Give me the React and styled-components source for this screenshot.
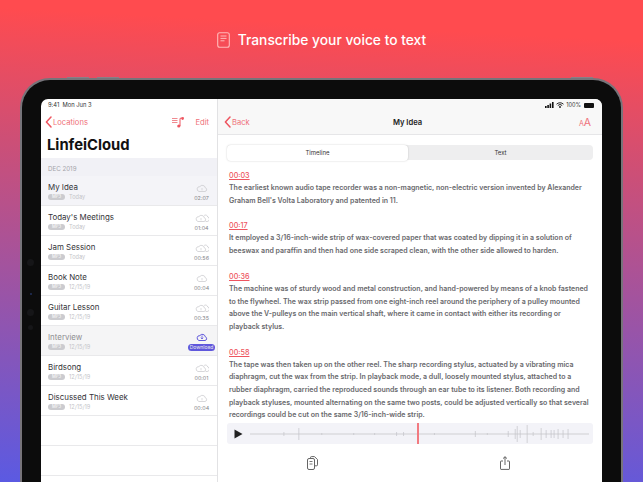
import React from "react";
import styled, { createGlobalStyle } from "styled-components";

const GlobalStyle = createGlobalStyle`
  html, body {
    margin: 0;
    padding: 0;
    height: 100%;
    overflow: hidden;
  }
  body {
    font-family: Inter, "Liberation Sans", sans-serif;
  }
`;

const recordings = [
  { title: "My Idea", date: "Today", time: "02:07", active: true },
  { title: "Today's Meetings", date: "Today", time: "01:04", multi: true },
  { title: "Jam Session", date: "Today", time: "00:56", multi: true },
  { title: "Book Note", date: "12/15/19", time: "00:04" },
  { title: "Guitar Lesson", date: "12/15/19", time: "00:35", multi: true },
  { title: "Interview", date: "12/15/19", download: true },
  { title: "Birdsong", date: "12/15/19", time: "00:01", multi: true },
  { title: "Discussed This Week", date: "12/15/19", time: "00:04" },
];

const transcript = [
  {
    time: "00:03",
    text: "The earliest known audio tape recorder was a non-magnetic, non-electric version invented by Alexander Graham Bell's Volta Laboratory and patented in 11.",
  },
  {
    time: "00:17",
    text: "It employed a 3/16-inch-wide strip of wax-covered paper that was coated by dipping it in a solution of beeswax and paraffin and then had one side scraped clean, with the other side allowed to harden.",
  },
  {
    time: "00:36",
    text: "The machine was of sturdy wood and metal construction, and hand-powered by means of a knob fastened to the flywheel. The wax strip passed from one eight-inch reel around the periphery of a pulley mounted above the V-pulleys on the main vertical shaft, where it came in contact with either its recording or playback stylus.",
  },
  {
    time: "00:58",
    text: "The tape was then taken up on the other reel. The sharp recording stylus, actuated by a vibrating mica diaphragm, cut the wax from the strip. In playback mode, a dull, loosely mounted stylus, attached to a rubber diaphragm, carried the reproduced sounds through an ear tube to its listener. Both recording and playback styluses, mounted alternating on the same two posts, could be adjusted vertically so that several recordings could be cut on the same 3/16-inch-wide strip.",
  },
];

// ticks of the wave form: [x, half height]
const ticks = [
  [34, 2], [49, 6], [72, 1], [104, 1], [125, 1], [147, 2], [154, 2], [185, 1], [226, 3],
  [238, 1], [259, 3], [266, 5], [268, 8], [271, 4], [278, 9], [284, 2], [292, 6], [297, 4],
  [302, 4], [305, 4], [309, 5], [314, 4], [319, 5],
];

const ChevronLeft = () => (
  <svg width="7" height="12" viewBox="0 0 7 12" fill="none">
    <path d="M6 1L1.4 6L6 11" stroke="#ee5560" strokeWidth="1.5" strokeLinecap="round" strokeLinejoin="round" />
  </svg>
);

const CLOUD = "M3 8.5h6a1.9 1.9 0 0 0 .3-3.7A3 3 0 0 0 3.9 3.6 2.5 2.5 0 0 0 3 8.5Z";

const Cloud = ({ color = "#c6c6ca", multi, arrow }) => (
  <svg width="14" height="10" viewBox="0 0 14 10" fill="none">
    {multi ? (
      <>
        <path d="M9.2 2.4a2.4 2.4 0 0 1 3.6 1.6 2.3 2.3 0 0 1-.6 4.5h-1.6" stroke={color} strokeWidth="0.7" />
        <path d={CLOUD} stroke={color} strokeWidth="0.7" />
        <path d="M6 5v2.4" stroke={color} strokeWidth="0.6" />
      </>
    ) : (
      <g transform="translate(1 0)">
        <path d={CLOUD} stroke={color} strokeWidth={arrow ? 1 : 0.7} />
        {arrow ? (
          <path d="M6 3.4v3.6M4.8 5.7L6 7l1.2-1.3" stroke={color} strokeWidth="0.8" />
        ) : (
          <path d="M6 5v2.4" stroke={color} strokeWidth="0.6" />
        )}
      </g>
    )}
  </svg>
);

export default function App() {
  return (
    <>
      <GlobalStyle />
      <Page>
        <Headline>
          <svg width="13" height="16" viewBox="0 0 13 16" fill="none">
            <rect x="0.7" y="0.7" width="11.6" height="14.6" rx="2" stroke="#ffb9b9" strokeWidth="1.1" />
            <path d="M3.5 4h6M3.5 6.4h6M3.5 8.8h4" stroke="#ffb9b9" strokeWidth="1" />
          </svg>
          Transcribe your voice to text
        </Headline>
        <Device>
          <CameraDots>
            <i />
            <i />
            <i />
            <i />
          </CameraDots>
          <Screen>
            <Sidebar>
              <StatusBar>9:41&nbsp; Mon Jun 3</StatusBar>
              <SideNav>
                <NavLink>
                  <ChevronLeft />
                  Locations
                </NavLink>
                <SideActions>
                  <svg width="12" height="11" viewBox="0 0 12 11" fill="none">
                    <path d="M0 1.5h5.5M0 3.5h5.5M0 5.5h5.5" stroke="#f08a90" strokeWidth="1" />
                    <path d="M8 9V1.4L11.5 .6" stroke="#ee5560" strokeWidth="1" />
                    <circle cx="6.8" cy="9" r="1.6" fill="#ee5560" />
                    <circle cx="10.6" cy="1.6" r="1.3" fill="#ee5560" />
                  </svg>
                  <NavLink>Edit</NavLink>
                </SideActions>
              </SideNav>
              <BigTitle>LinfeiCloud</BigTitle>
              <MonthHeader>DEC 2019</MonthHeader>
              {recordings.map((item) => (
                <Row key={item.title} $active={item.active} $dim={item.download}>
                  <RowText>
                    <RowTitle $dim={item.download}>{item.title}</RowTitle>
                    <RowMeta>
                      <Badge>MP3</Badge>
                      {item.date}
                    </RowMeta>
                  </RowText>
                  <RowSide>
                    {item.download ? (
                      <>
                        <Cloud color="#5f57dc" arrow />
                        <DownloadPill>Download</DownloadPill>
                      </>
                    ) : (
                      <>
                        <Cloud multi={item.multi} />
                        <Duration>{item.time}</Duration>
                      </>
                    )}
                  </RowSide>
                </Row>
              ))}
              <Row />
              <Row />
            </Sidebar>
            <Detail>
              <DetailTop>
                <DetailStatus>
                  <svg width="9" height="6" viewBox="0 0 9 6">
                    <path d="M0 4h1.6v2H0zM2.3 3h1.6v3H2.3zM4.6 1.6h1.6V6H4.6zM7 0h1.6v6H7z" fill="#111" />
                  </svg>
                  <svg width="8" height="6" viewBox="0 0 8 6" fill="none">
                    <path d="M.5 2.2a5 5 0 0 1 7 0M1.8 3.5a3.2 3.2 0 0 1 4.4 0" stroke="#111" strokeWidth="0.9" />
                    <circle cx="4" cy="5" r="0.9" fill="#111" />
                  </svg>
                  100%
                  <BatteryIcon />
                </DetailStatus>
                <DetailNav>
                  <NavLink>
                    <ChevronLeft />
                    Back
                  </NavLink>
                  <DetailTitle>My Idea</DetailTitle>
                  <FontToggle>
                    <small>A</small>A
                  </FontToggle>
                </DetailNav>
              </DetailTop>
              <DetailBody>
                <Segments>
                  <Segment $selected>Timeline</Segment>
                  <Segment>Text</Segment>
                </Segments>
                <Transcript>
                  {transcript.map((block) => (
                    <Block key={block.time}>
                      <Stamp>{block.time}</Stamp>
                      <Paragraph>{block.text}</Paragraph>
                    </Block>
                  ))}
                </Transcript>
                <Player>
                  <svg width="9" height="10" viewBox="0 0 9 10">
                    <path d="M0.5 0.5L8.5 5L0.5 9.5Z" fill="#222" />
                  </svg>
                  <Wave viewBox="0 0 340 20" preserveAspectRatio="none">
                    <path d="M0 10H340" stroke="#cfcfd3" strokeWidth="1" />
                    {ticks.map(([x, h]) => (
                      <path key={x} d={`M${x} ${10 - h}V${10 + h}`} stroke="#c2c2c8" strokeWidth="0.7" />
                    ))}
                  </Wave>
                  <Playhead />
                </Player>
                <BottomBar>
                  <svg width="11" height="14" viewBox="0 0 11 14" fill="none">
                    <rect x="0.5" y="2.5" width="7" height="11" rx="1.5" stroke="#555" strokeWidth="0.9" />
                    <path d="M3.5 2.2V1.6a1 1 0 0 1 1-1h3l3 3v5.2a1 1 0 0 1-1 1H8" stroke="#555" strokeWidth="0.9" />
                    <path d="M2.5 5.5h3M2.5 8h3" stroke="#555" strokeWidth="0.8" />
                  </svg>
                  <svg width="10" height="14" viewBox="0 0 10 14" fill="none">
                    <path d="M3 5H1a.6.6 0 0 0-.5.6v7.2a.6.6 0 0 0 .5.6h8a.6.6 0 0 0 .5-.6V5.6A.6.6 0 0 0 9 5H7" stroke="#555" strokeWidth="0.9" />
                    <path d="M5 9V.8M3 2.6L5 .7l2 1.9" stroke="#555" strokeWidth="0.9" />
                  </svg>
                </BottomBar>
              </DetailBody>
            </Detail>
          </Screen>
        </Device>
      </Page>
    </>
  );
}

const Page = styled.div`
  width: 643px;
  height: 482px;
  overflow: hidden;
  display: flex;
  flex-direction: column;
  align-items: center;
  background: linear-gradient(183deg, #ff4b4f 0%, #ff4b4f 8%, #cc4f77 34%, #5b5ae2 100%);
`;

const Headline = styled.h1`
  margin: 0;
  height: 78px;
  flex: none;
  display: flex;
  align-items: center;
  gap: 8px;
  padding-top: 2px;
  box-sizing: border-box;
  color: #fff;
  font-size: 13.8px;
  font-weight: 500;
`;

const Device = styled.div`
  position: relative;
  width: 603px;
  height: 430px;
  flex: none;
  box-sizing: border-box;
  padding: 19px 19px 0 19px;
  background: #0c0c0c;
  border: 2px solid #77747a;
  border-bottom: 0;
  border-radius: 30px 30px 0 0;

  /* volume buttons along the top edge */
  &::before {
    content: "";
    position: absolute;
    top: -3px;
    left: 45px;
    width: 52px;
    height: 1px;
    background: linear-gradient(90deg, #8a7f86 0 42%, transparent 42% 58%, #8a7f86 58%);
  }
  /* power button */
  &::after {
    content: "";
    position: absolute;
    top: -3px;
    right: 28px;
    width: 22px;
    height: 1px;
    background: #8a7f86;
  }
`;

const CameraDots = styled.div`
  position: absolute;
  left: 5px;
  top: 179px;
  display: flex;
  flex-direction: column;
  align-items: center;
  gap: 13px;
  i {
    width: 7px;
    height: 7px;
    border-radius: 50%;
    background: #161618;
  }
  i:nth-child(2) {
    width: 2px;
    height: 2px;
    margin: 14px 0 1px;
    background: #22305c;
  }
  i:nth-child(4) {
    width: 5px;
    height: 5px;
    margin-top: -4px;
  }
`;

const Screen = styled.div`
  height: 100%;
  display: flex;
  overflow: hidden;
  background: #fff;
  border-radius: 7px 7px 0 0;
`;

const Sidebar = styled.aside`
  width: 176px;
  flex: none;
  border-right: 1px solid #e2e2e4;
  color: #111;
`;

const StatusBar = styled.div`
  height: 11px;
  padding: 1px 0 0 7px;
  box-sizing: border-box;
  font-size: 5.8px;
  line-height: 10px;
  color: #333;
`;

const SideNav = styled.div`
  height: 24px;
  display: flex;
  align-items: center;
  justify-content: space-between;
  padding: 0 8px 0 4px;
`;

const NavLink = styled.span`
  display: inline-flex;
  align-items: center;
  gap: 1px;
  color: #ef7078;
  font-size: 7.6px;
`;

const SideActions = styled.div`
  display: flex;
  align-items: center;
  gap: 11px;
`;

const BigTitle = styled.div`
  height: 24px;
  padding-left: 6px;
  font-size: 14.8px;
  line-height: 22px;
  font-weight: 700;
  color: #111;
`;

const MonthHeader = styled.div`
  height: 18px;
  padding-left: 7px;
  background: #f1f1f6;
  color: #a4a4aa;
  font-size: 6.2px;
  line-height: 22px;
`;

const Row = styled.div`
  height: 30px;
  box-sizing: border-box;
  display: flex;
  align-items: center;
  justify-content: space-between;
  padding: 2px 8px 0 7px;
  border-bottom: 1px solid #e9e9eb;
  background: ${(p) => (p.$active ? "#f4f4f8" : p.$dim ? "#f5f5f6" : "#fff")};
`;

const RowText = styled.div`
  display: flex;
  flex-direction: column;
  gap: 1px;
  margin-bottom: 2px;
`;

const RowTitle = styled.div`
  font-size: 7.9px;
  line-height: 11px;
  color: ${(p) => (p.$dim ? "#8e8e92" : "#333338")};
`;

const RowMeta = styled.div`
  display: flex;
  align-items: center;
  gap: 4px;
  font-size: 5.6px;
  color: #c4c4c8;
`;

const Badge = styled.span`
  display: inline-block;
  padding: 0 4px;
  height: 6px;
  line-height: 6px;
  border-radius: 3px;
  background: #cbcbcf;
  color: #fff;
  font-size: 4.2px;
`;

const RowSide = styled.div`
  display: flex;
  flex-direction: column;
  align-items: center;
  gap: 2px;
  width: 15px;
`;

const Duration = styled.span`
  font-size: 5.4px;
  color: #85858a;
`;

const DownloadPill = styled.span`
  padding: 0 2px;
  height: 7px;
  line-height: 7px;
  border-radius: 4px;
  background: #5f57dc;
  color: #eee;
  font-size: 5px;
  white-space: nowrap;
`;

const Detail = styled.section`
  flex: 1;
  min-width: 0;
  display: flex;
  flex-direction: column;
`;

const DetailTop = styled.header`
  height: 35px;
  flex: none;
  background: #f8f8f8;
  border-bottom: 1px solid #e6e6e8;
`;

const DetailStatus = styled.div`
  height: 11px;
  display: flex;
  justify-content: flex-end;
  align-items: center;
  gap: 2px;
  padding: 1px 8px 0 0;
  box-sizing: border-box;
  font-size: 5.6px;
  color: #333;
`;

const BatteryIcon = styled.span`
  display: inline-block;
  width: 10px;
  height: 5px;
  margin-left: 1px;
  border-radius: 1px;
  background: #111;
`;

const DetailNav = styled.div`
  height: 24px;
  display: grid;
  grid-template-columns: 1fr auto 1fr;
  align-items: center;
  padding: 0 11px 0 6px;
`;

const DetailTitle = styled.div`
  font-size: 7.6px;
  font-weight: 600;
  color: #222;
`;

const FontToggle = styled.div`
  justify-self: end;
  color: #ef7078;
  font-size: 10.5px;
  small {
    font-size: 7px;
  }
`;

const DetailBody = styled.div`
  flex: 1;
  min-height: 0;
  display: flex;
  flex-direction: column;
  padding: 10px 9px 0;
`;

const Segments = styled.div`
  display: grid;
  grid-template-columns: 181px 1fr;
  height: 15px;
  border-radius: 4px;
  background: #eeeeef;
  flex: none;
`;

const Segment = styled.div`
  text-align: center;
  font-size: 6px;
  line-height: 16px;
  color: #333;
  border-radius: 4px;
  background: ${(p) => (p.$selected ? "#fff" : "transparent")};
  box-shadow: ${(p) => (p.$selected ? "0 0 2px rgba(0,0,0,.2)" : "none")};
`;

const Transcript = styled.div`
  flex: none;
  padding: 10px 2px 0;
  height: 263px;
  box-sizing: border-box;
`;

const Block = styled.div`
  margin-bottom: 13px;
`;

const Stamp = styled.div`
  color: #ee5560;
  font-size: 7.2px;
  line-height: 12px;
  text-decoration: underline;
  font-weight: 500;
`;

const Paragraph = styled.p`
  margin: 0;
  color: #68686c;
  font-size: 7px;
  line-height: 12.7px;
  font-weight: 600;
`;

const Player = styled.div`
  position: relative;
  height: 21px;
  flex: none;
  display: flex;
  align-items: center;
  gap: 7px;
  padding: 0 4px 0 7px;
  border-radius: 3px;
  background: #f3f3f8;
`;

const Wave = styled.svg`
  flex: 1;
  height: 20px;
`;

const Playhead = styled.span`
  position: absolute;
  left: 190px;
  top: 0;
  bottom: 0;
  width: 2px;
  background: #f27a80;
`;

const BottomBar = styled.div`
  height: 38px;
  flex: none;
  display: flex;
  align-items: center;
  justify-content: space-between;
  padding: 0 83px 0 80px;
`;
